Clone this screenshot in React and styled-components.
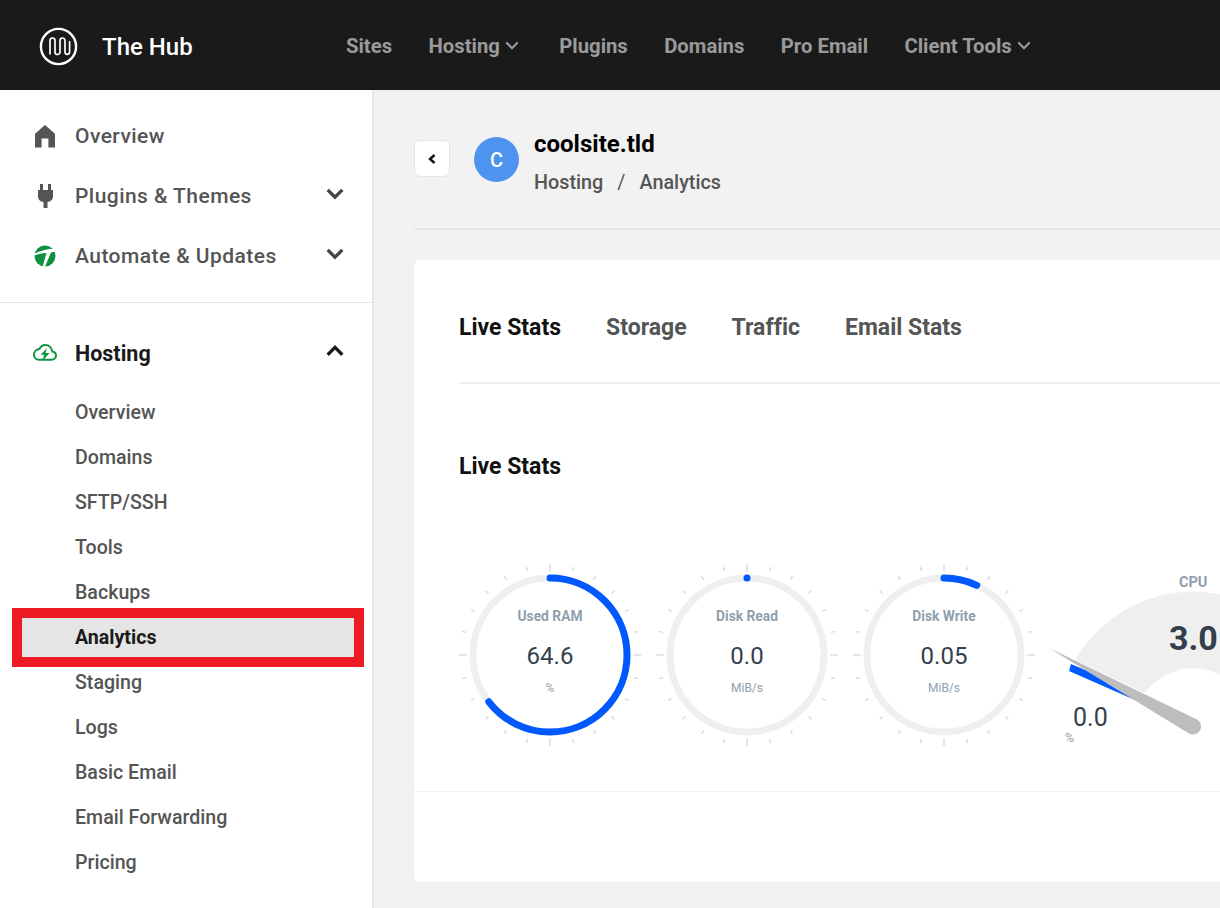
import React from "react";
import styled, { createGlobalStyle } from "styled-components";

const GlobalStyle = createGlobalStyle`
  html, body {
    margin: 0;
    padding: 0;
    width: 1220px;
    height: 908px;
    overflow: hidden;
    background: #f2f2f2;
    font-family: Roboto, "Liberation Sans", sans-serif;
    font-variant-ligatures: none;
  }
  * { box-sizing: border-box; }
`;

const Page = styled.div`
  width: 1220px;
  height: 908px;
  display: flex;
  flex-direction: column;
  overflow: hidden;
`;

const TopBar = styled.header`
  flex: 0 0 90px;
  background: #1a1a1a;
  display: flex;
  align-items: center;
  padding: 2px 0 0 39px;
`;
const Brand = styled.div`
  width: 307px;
  display: flex;
  align-items: center;
  gap: 24px;
  color: #fff;
  font-size: 24px;
  font-weight: 500;
`;
const BrandName = styled.span`
  margin-top: 2px;
`;
const TopNav = styled.nav`
  display: flex;
  gap: 36.4px;
`;
const TopLink = styled.span`
  display: flex;
  align-items: center;
  gap: 5px;
  padding-right: ${(p) => (p.$menu ? "4px" : "0")};
  color: #9a9a9a;
  font-size: 20.3px;
  font-weight: 700;
`;

const Body = styled.div`
  flex: 1;
  display: flex;
  min-height: 0;
`;

const Sidebar = styled.aside`
  flex: 0 0 374px;
  background: #fff;
  border-right: 2px solid #e6e6e6;
  padding-top: 16px;
`;
const MainItem = styled.div`
  height: 60px;
  display: flex;
  align-items: center;
  padding: 0 28px 0 34px;
  color: ${(p) => (p.$open ? "#1a1a1a" : "#555")};
  font-size: ${(p) => (p.$open ? "21.5px" : "21px")};
  font-weight: ${(p) => (p.$open ? 700 : 500)};
  letter-spacing: ${(p) => (p.$open ? "0" : "0.45px")};
`;
const ItemIcon = styled.span`
  flex: 0 0 41px;
  display: flex;
  align-items: center;
  margin-left: ${(p) => (p.$cloud ? "-1px" : "0")};
`;
const ItemLabel = styled.span`
  flex: 1;
  margin-left: ${(p) => (p.$cloud ? "1px" : "0")};
`;
const SideChevron = styled.span`
  display: flex;
  margin-top: -4px;
`;
const SideDivider = styled.div`
  height: 1px;
  background: #e6e6e6;
  margin: 16px 0 20px;
`;
const SubList = styled.div`
  margin-top: 7px;
`;
const SubItem = styled.div`
  position: relative;
  height: 45px;
  display: flex;
  align-items: center;
  padding-left: 75px;
  color: ${(p) => (p.$active ? "#1a1a1a" : "#555")};
  font-size: 19.6px;
  font-weight: ${(p) => (p.$active ? 700 : 500)};
`;
const Marker = styled.span`
  position: absolute;
  left: 12px;
  top: -7px;
  width: 352px;
  height: 59px;
  background: #e5e5e5;
  border: 10px solid #ed1c24;
`;
const SubLabel = styled.span`
  position: relative;
`;

const Main = styled.main`
  flex: 1;
  min-width: 0;
  padding: 47px 0 26px 40px;
  display: flex;
  flex-direction: column;
`;
const SiteHead = styled.div`
  height: 93px;
  flex: 0 0 93px;
  display: flex;
  align-items: flex-start;
  border-bottom: 2px solid #e6e6e6;
`;
const BackButton = styled.button`
  width: 36px;
  height: 37px;
  margin: 3px 24px 0 0;
  padding: 0;
  background: #fff;
  border: 1px solid #e6e6e6;
  border-radius: 6px;
  display: flex;
  align-items: center;
  justify-content: center;
`;
const Avatar = styled.div`
  width: 45px;
  height: 45px;
  margin-right: 15px;
  border-radius: 50%;
  background: #4e94ee;
  color: #fff;
  font-size: 20px;
  font-weight: 500;
  display: flex;
  align-items: center;
  justify-content: center;
`;
const SiteName = styled.div`
  color: #000;
  font-size: 24px;
  font-weight: 700;
  line-height: 28px;
  margin-top: -7px;
`;
const Crumbs = styled.div`
  display: flex;
  gap: 14px;
  margin-top: 11px;
  color: #555;
  font-size: 19.8px;
  font-weight: 500;
  line-height: 28px;
`;
const Slash = styled.span`
  font-weight: 400;
`;

const Card = styled.section`
  flex: 1;
  margin-top: 30px;
  width: 900px;
  background: #fff;
  border-radius: 6px;
  padding: 0 0 0 45px;
  overflow: hidden;
`;
const Tabs = styled.div`
  height: 124px;
  display: flex;
  align-items: center;
  gap: 45px;
  border-bottom: 2px solid #f0f0f0;
  padding-top: 12px;
`;
const Tab = styled.span`
  color: ${(p) => (p.$active ? "#111" : "#555")};
  font-size: 23px;
  font-weight: 700;
`;
const SectionTitle = styled.h2`
  margin: 68px 0 0;
  color: #111;
  font-size: 23px;
  font-weight: 700;
  line-height: 30px;
`;
const GaugeRow = styled.div`
  display: flex;
  gap: 13px;
  margin: 81px 0 0 -1px;
  height: 184px;
`;
const RoundGauge = styled.div`
  position: relative;
  flex: 0 0 184px;
  height: 184px;
`;
const GaugeText = styled.div`
  position: absolute;
  inset: 0;
  display: flex;
  flex-direction: column;
  align-items: center;
`;
const GaugeTitle = styled.div`
  margin-top: 44px;
  color: #8f9fae;
  font-size: 13.8px;
  font-weight: 700;
  line-height: 18px;
`;
const GaugeValue = styled.div`
  margin-top: 16px;
  color: #333f4d;
  font-size: 24px;
  line-height: 30px;
`;
const GaugeUnit = styled.div`
  margin-top: 10px;
  color: #8f9fae;
  font-size: 12px;
  line-height: 14px;
`;
const CpuGauge = styled.div`
  position: relative;
  flex: 0 0 300px;
  height: 184px;
`;
const CpuTitle = styled.div`
  position: absolute;
  left: 130px;
  top: 11px;
  color: #8f9fae;
  font-size: 14.5px;
  font-weight: 700;
  line-height: 18px;
`;
const CpuValue = styled.div`
  position: absolute;
  left: 120px;
  top: 55px;
  color: #333f4d;
  font-size: 34px;
  font-weight: 700;
  line-height: 40px;
`;
const NeedleValue = styled.div`
  position: absolute;
  left: 24px;
  top: 140px;
  color: #333f4d;
  font-size: 25px;
  line-height: 30px;
`;
const NeedleUnit = styled.div`
  position: absolute;
  left: 16px;
  top: 168px;
  color: #8f9fae;
  font-size: 12.5px;
  line-height: 14px;
`;
const CardRule = styled.div`
  height: 1px;
  background: #f0f0f0;
  margin: 44px 0 0 -45px;
`;

const Chevron = ({ up, size = 18, color = "#444", width = 3.4 }) => (
  <svg width={size} height={size * 0.65} viewBox="0 0 18 12" fill="none">
    <path
      d={up ? "M1.5 10 L9 2.5 L16.5 10" : "M1.5 2 L9 9.5 L16.5 2"}
      stroke={color}
      strokeWidth={width}
    />
  </svg>
);

const LogoMark = () => (
  <svg width="39" height="39" viewBox="0 0 39 39" fill="none" stroke="#fff">
    <circle cx="19.5" cy="19.5" r="17.6" strokeWidth="2.4" />
    <path
      d="M11 27.5 V13.5 a2.5 2.5 0 0 1 5 0 V25 a2.5 2.5 0 0 0 5 0 V13.5 a2.5 2.5 0 0 1 5 0 V25 a2.3 2.3 0 0 0 4.6 0 V14"
      strokeWidth="1.7"
    />
  </svg>
);

const HomeIcon = () => (
  <svg width="22" height="23" viewBox="0 0 22 23">
    <path fill="#555" d="M11 0 L21 8.8 V22.5 H14.4 V13.6 H7.6 V22.5 H1 V8.8 Z" />
  </svg>
);

const PlugIcon = () => (
  <svg width="22" height="24" viewBox="0 0 22 24">
    <path
      fill="#555"
      d="M6 0 h3 v6 h5 v-6 h3 v6 h2 v6.5 c0 3.2 -2.2 5 -5.5 5.5 v6 h-4 v-6 c-3.3 -.5 -5.5 -2.3 -5.5 -5.5 v-6.5 h2 z"
    />
  </svg>
);

const AutomateIcon = () => (
  <svg width="22" height="22" viewBox="0 0 22 22">
    <circle cx="11" cy="11" r="10.5" fill="#0f8f3e" />
    <path
      fill="#fff"
      d="M0 9 C6 5.5 13 4 21 3.5 L21.6 6.5 L17 7.5 L11 21.8 L8.5 21.8 L12.5 8 C8 8.2 4 9 0.5 10.5 Z"
    />
  </svg>
);

const CloudIcon = () => (
  <svg width="24" height="18" viewBox="0 0 24 18" fill="none">
    <path
      stroke="#0d9440"
      strokeWidth="2"
      d="M6 15.8 H18.5 C21 15.8 23 14 23 11.6 C23 9.4 21.4 7.7 19.2 7.4 C18.6 3.6 15.8 1 12.4 1 C9.6 1 7.4 2.6 6.3 5.1 C3.2 5.4 1 7.9 1 10.7 C1 13.5 3.2 15.8 6 15.8 Z"
    />
    <path fill="#0d9440" d="M13.6 4.5 L7.5 10.8 H11 L9.5 17 L16.5 9 H12.6 Z" />
  </svg>
);

const BackIcon = () => (
  <svg width="10" height="12" viewBox="0 0 10 12" fill="none">
    <path d="M7.5 2 L3 6 L7.5 10" stroke="#111" strokeWidth="2.4" />
  </svg>
);

const ticks = Array.from({ length: 24 }, (_, i) => i * 15);

const Dial = ({ percent }) => (
  <svg width="184" height="184" viewBox="-92 -92 184 184" fill="none">
    {ticks.map((deg) => (
      <line
        key={deg}
        x1="0"
        x2="0"
        y1={-91}
        y2={deg % 90 === 0 ? -83 : -87}
        stroke="#d8d8d8"
        strokeWidth="1.3"
        transform={`rotate(${deg})`}
      />
    ))}
    <circle r="77" stroke="#efefef" strokeWidth="7" />
    <circle
      r="77"
      stroke="#0059ff"
      strokeWidth="7"
      strokeLinecap="round"
      pathLength="100"
      strokeDasharray={`${percent || 0.001} 1000`}
      transform="rotate(-90)"
    />
  </svg>
);

const Gauge = ({ title, value, unit, percent }) => (
  <RoundGauge>
    <Dial percent={percent} />
    <GaugeText>
      <GaugeTitle>{title}</GaugeTitle>
      <GaugeValue>{value}</GaugeValue>
      <GaugeUnit>{unit}</GaugeUnit>
    </GaugeText>
  </RoundGauge>
);

const Cpu = () => (
  <CpuGauge>
    <svg width="300" height="184" viewBox="0 0 300 184" style={{ overflow: "visible" }}>
      <path
        fill="#efefef"
        d="M26 97 A136 136 0 0 1 280 164 H203 A59 59 0 0 0 96 130 Z"
      />
      <path fill="#0059ff" d="M22 101 L20 108 L86 137 L92 131 Z" />
      <path fill="#bdbdbd" d="M0 85 L148 156.5 A8 8 0 0 1 140 170.5 Z" />
    </svg>
    <CpuTitle>CPU</CpuTitle>
    <CpuValue>3.0</CpuValue>
    <NeedleValue>0.0</NeedleValue>
    <NeedleUnit>%</NeedleUnit>
  </CpuGauge>
);

const subItems = [
  "Overview",
  "Domains",
  "SFTP/SSH",
  "Tools",
  "Backups",
  "Analytics",
  "Staging",
  "Logs",
  "Basic Email",
  "Email Forwarding",
  "Pricing",
];

const App = () => (
  <Page>
    <GlobalStyle />
    <TopBar>
      <Brand>
        <LogoMark />
        <BrandName>The Hub</BrandName>
      </Brand>
      <TopNav>
        <TopLink>Sites</TopLink>
        <TopLink $menu>
          Hosting <Chevron size={14} color="#9a9a9a" width={3} />
        </TopLink>
        <TopLink>Plugins</TopLink>
        <TopLink>Domains</TopLink>
        <TopLink>Pro Email</TopLink>
        <TopLink $menu>
          Client Tools <Chevron size={14} color="#9a9a9a" width={3} />
        </TopLink>
      </TopNav>
    </TopBar>
    <Body>
      <Sidebar>
        <MainItem>
          <ItemIcon><HomeIcon /></ItemIcon>
          <ItemLabel>Overview</ItemLabel>
        </MainItem>
        <MainItem>
          <ItemIcon><PlugIcon /></ItemIcon>
          <ItemLabel>Plugins &amp; Themes</ItemLabel>
          <SideChevron><Chevron /></SideChevron>
        </MainItem>
        <MainItem>
          <ItemIcon><AutomateIcon /></ItemIcon>
          <ItemLabel>Automate &amp; Updates</ItemLabel>
          <SideChevron><Chevron /></SideChevron>
        </MainItem>
        <SideDivider />
        <MainItem $open>
          <ItemIcon $cloud><CloudIcon /></ItemIcon>
          <ItemLabel $cloud>Hosting</ItemLabel>
          <SideChevron><Chevron up color="#1a1a1a" /></SideChevron>
        </MainItem>
        <SubList>
          {subItems.map((name) => (
            <SubItem key={name} $active={name === "Analytics"}>
              {name === "Analytics" && <Marker />}
              <SubLabel>{name}</SubLabel>
            </SubItem>
          ))}
        </SubList>
      </Sidebar>
      <Main>
        <SiteHead>
          <BackButton><BackIcon /></BackButton>
          <Avatar>C</Avatar>
          <div>
            <SiteName>coolsite.tld</SiteName>
            <Crumbs>
              <span>Hosting</span>
              <Slash>/</Slash>
              <span>Analytics</span>
            </Crumbs>
          </div>
        </SiteHead>
        <Card>
          <Tabs>
            <Tab $active>Live Stats</Tab>
            <Tab>Storage</Tab>
            <Tab>Traffic</Tab>
            <Tab>Email Stats</Tab>
          </Tabs>
          <SectionTitle>Live Stats</SectionTitle>
          <GaugeRow>
            <Gauge title="Used RAM" value="64.6" unit="%" percent={64.6} />
            <Gauge title="Disk Read" value="0.0" unit="MiB/s" percent={0} />
            <Gauge title="Disk Write" value="0.05" unit="MiB/s" percent={7} />
            <Cpu />
          </GaugeRow>
          <CardRule />
        </Card>
      </Main>
    </Body>
  </Page>
);

export default App;
